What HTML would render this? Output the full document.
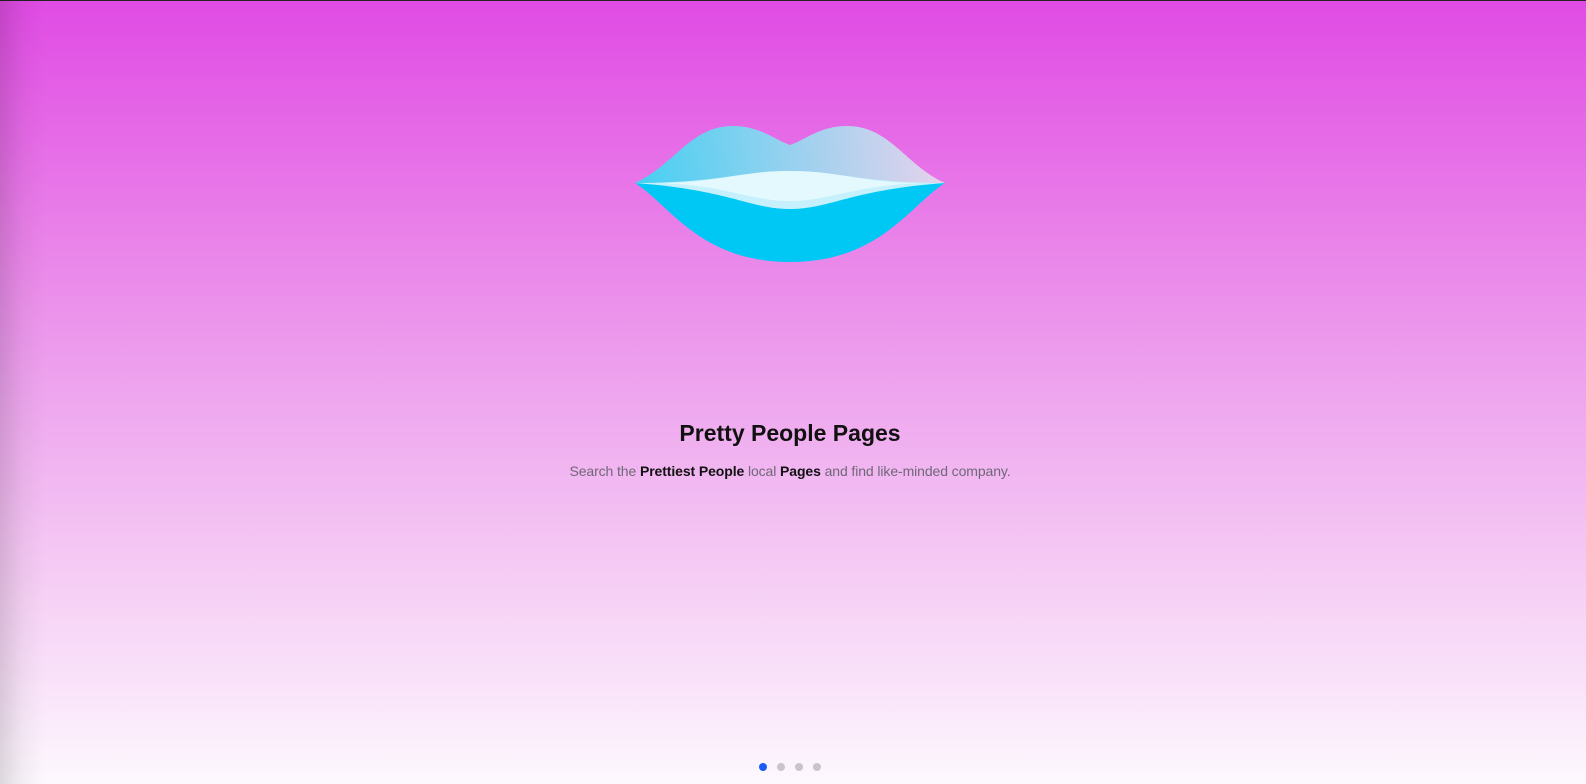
<!DOCTYPE html>
<html><head><style>
html,body{margin:0;padding:0;width:1586px;height:784px;overflow:hidden}
body{position:relative;background:linear-gradient(to bottom,#e04be4 0%,#e878e8 25%,#eea5ee 50%,#f6cff5 75%,#fdf8fe 100%);font-family:"Liberation Sans",sans-serif}
.top{position:absolute;top:0;left:0;right:0;height:1px;background:#222}
.shadow{position:absolute;top:0;bottom:0;left:0;width:45px;background:linear-gradient(to right,rgba(0,0,0,0.13),rgba(0,0,0,0.04) 50%,rgba(0,0,0,0))}
h1{position:absolute;top:420px;left:0;width:1580px;text-align:center;margin:0;font-size:23px;font-weight:bold;color:#111}
p{position:absolute;top:463px;left:0;width:1580px;text-align:center;margin:0;font-size:14px;color:#6f6877;letter-spacing:-0.1px}
p b{color:#111}
.dots{position:absolute;top:763px;left:759px}
.dots span{position:absolute;top:0;width:8px;height:8px;border-radius:50%;background:#c9c3cb}
</style></head><body>
<div class="top"></div>
<div class="shadow"></div>
<svg width="1586" height="784" style="position:absolute;left:0;top:0">
<defs>
<linearGradient id="u" x1="635" y1="183" x2="945" y2="150" gradientUnits="userSpaceOnUse">
<stop offset="0" stop-color="#45d0f2"/><stop offset="1" stop-color="#e8d2ec"/></linearGradient>
</defs>
<path d="M635,183 C675,165 690,126 733,126 C760,126 775,140 790,145 C805,140 820,126 847,126 C890,126 905,165 945,183 Z" fill="url(#u)"/>
<path d="M635,183 C670,205 700,262 790,262 C880,262 910,205 945,183 Z" fill="#00c8f5"/>
<path d="M635,183 C730,190 750,209 790,209 C830,209 850,190 945,183 C860,183 840,171 790,171 C740,171 720,183 635,183 Z" fill="#c6f1fc"/>
<path d="M660,183 C730,186 750,201 790,201 C830,201 850,186 920,183 C860,183 840,171 790,171 C740,171 720,183 660,183 Z" fill="#e4f9fd"/>
</svg>
<h1>Pretty People Pages</h1>
<p>Search the <b>Prettiest People</b> local <b>Pages</b> and find like-minded company.</p>
<div class="dots"><span style="left:0;background:#1a5cf5"></span><span style="left:18px"></span><span style="left:36px"></span><span style="left:54px"></span></div>
</body></html>
